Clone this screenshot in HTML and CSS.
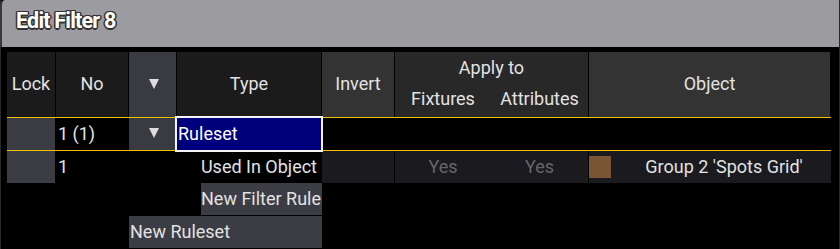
FILE: index.html
```html
<!DOCTYPE html>
<html lang="en">
<head>
    <meta charset="UTF-8">
    <title>Edit Filter 8</title>
    <link rel="stylesheet" href="styles.css">
</head>
<body>

<div class="window">
    <div class="title-bar">
        <span class="title">Edit Filter 8</span>
    </div>

    <div class="sheet">
        <!-- Header -->
        <div class="grid header">
            <div class="cell head dark">Lock</div>
            <div class="cell head dark">No</div>
            <div class="cell head arrow-col"><span class="arrow"></span></div>
            <div class="cell head dark">Type</div>
            <div class="cell head mid">Invert</div>
            <div class="cell head apply">
                <div class="apply-title">Apply to</div>
                <div class="apply-sub">
                    <span>Fixtures</span>
                    <span>Attributes</span>
                </div>
            </div>
            <div class="cell head mid">Object</div>
        </div>

        <div class="yellow-line"></div>

        <!-- Ruleset row -->
        <div class="grid row">
            <div class="cell lock-box"></div>
            <div class="cell text-left">1 (1)</div>
            <div class="cell arrow-col"><span class="arrow"></span></div>
            <div class="cell selected">Ruleset</div>
        </div>

        <div class="yellow-line"></div>

        <!-- Rule row -->
        <div class="grid row">
            <div class="cell lock-box"></div>
            <div class="cell text-left">1</div>
            <div class="cell"></div>
            <div class="cell text-right">Used In Object</div>
            <div class="cell field sep"></div>
            <div class="cell field sep apply-values">
                <span>Yes</span>
                <span>Yes</span>
            </div>
            <div class="cell field object">
                <span class="swatch"></span>
                <span class="object-name">Group 2 'Spots Grid'</span>
            </div>
        </div>

        <div class="grid row">
            <div class="cell"></div>
            <div class="cell"></div>
            <div class="cell"></div>
            <div class="cell"><div class="button new-rule">New Filter Rule</div></div>
        </div>

        <div class="grid row">
            <div class="cell"></div>
            <div class="cell"></div>
            <div class="cell span-2"><div class="button new-ruleset">New Ruleset</div></div>
        </div>
    </div>
</div>

</body>
</html>
```

FILE: styles.css
```css
/* Basic styling */
body {
    margin: 0;
    background-color: #000;
    font-family: Roboto, "Noto Sans", sans-serif;
    color: #e2e2e2;
    width: 840px;
    height: 249px;
    overflow: hidden;
}

.window {
    height: 249px;
    border-left: 1px solid #2a2a2a;
    border-right: 1px solid #2a2a2a;
    box-sizing: border-box;
}

/* Title bar */
.title-bar {
    height: 47px;
    background-color: #9b9ba0;
    border-top-left-radius: 5px;
    border-left: 2px solid #3a3a3e;
    margin-left: -1px;
    box-sizing: border-box;
    padding-left: 14px;
    display: flex;
    align-items: center;
}

.title {
    font-size: 21.5px;
    font-weight: bold;
    letter-spacing: -0.8px;
    color: #fff;
    margin-top: -6px;
    text-shadow: -1px -1px 0 #333, 1px -1px 0 #333, -1px 1px 0 #333, 1px 1px 0 #333,
                 0 -1.5px 0 #333, 0 1.5px 0 #333, -1.5px 0 0 #333, 1.5px 0 0 #333;
}

/* Sheet */
.sheet {
    margin-top: 5px;
    margin-left: 6px;
    width: 824px;
}

.grid {
    display: grid;
    grid-template-columns: 49px 73px 48px 145px 73px 194px 242px;
}

.header {
    height: 65px;
}

.row {
    height: 32px;
    margin-bottom: 1px;
}

.yellow-line {
    height: 1px;
    background-color: #f2c200;
}

.yellow-line + .row {
    margin-bottom: 0;
}

.cell {
    display: flex;
    align-items: center;
    font-size: 18px;
    box-sizing: border-box;
    white-space: nowrap;
    padding-bottom: 2px;
}

.head {
    justify-content: center;
    border-right: 1px solid #000;
}

.dark {
    background-color: #1b1b1b;
}

.mid {
    background-color: #333333;
}

.apply {
    background-color: #282828;
    flex-direction: column;
    align-items: stretch;
    justify-content: center;
    padding-bottom: 3px;
}

.apply-title {
    text-align: center;
    margin-bottom: 10px;
}

.apply-sub {
    display: flex;
}

.apply-sub span,
.apply-values span {
    flex: 1;
    text-align: center;
}

.apply-sub span:first-child,
.apply-values span:first-child {
    flex: 0 0 96px;
}

.arrow-col {
    background-color: #3a3a42;
    justify-content: center;
    border-right: 1px solid #000;
}

.arrow {
    width: 0;
    height: 0;
    border-left: 5px solid transparent;
    border-right: 5px solid transparent;
    border-top: 10px solid #dcdcdc;
    margin-left: 2px;
}

.lock-box {
    background-color: #3c3c44;
    border-right: 1px solid #000;
}

.text-left {
    padding-left: 2px;
}

.text-right {
    justify-content: flex-end;
    padding-right: 5px;
}

.selected {
    background-color: #00007c;
    color: #fff;
    outline: 2px solid #f4f4f4;
    padding-left: 1px;
    margin-right: 1px;
    position: relative;
    z-index: 1;
}

.field {
    background-color: #1a1a1f;
}

.sep {
    border-right: 1px solid #000;
}

.apply-values {
    color: #666669;
}

.object {
    padding-left: 0;
    padding-bottom: 0;
}

.object-name {
    padding-bottom: 2px;
}

.swatch {
    width: 22px;
    height: 22px;
    background-color: #7a5535;
    flex: 0 0 22px;
}

.object-name {
    flex: 1;
    text-align: center;
    margin-left: 6px;
}

.span-2 {
    grid-column: span 2;
}

.button {
    background-color: #3c3c44;
    height: 32px;
    display: flex;
    align-items: center;
    width: 100%;
    padding-bottom: 2px;
    box-sizing: border-box;
}

.new-rule {
    margin-left: 24px;
    justify-content: flex-end;
    padding-right: 1px;
}

.new-ruleset {
    padding-left: 1px;
}

.span-2,
.cell:has(.button) {
    padding-bottom: 0;
}
```
